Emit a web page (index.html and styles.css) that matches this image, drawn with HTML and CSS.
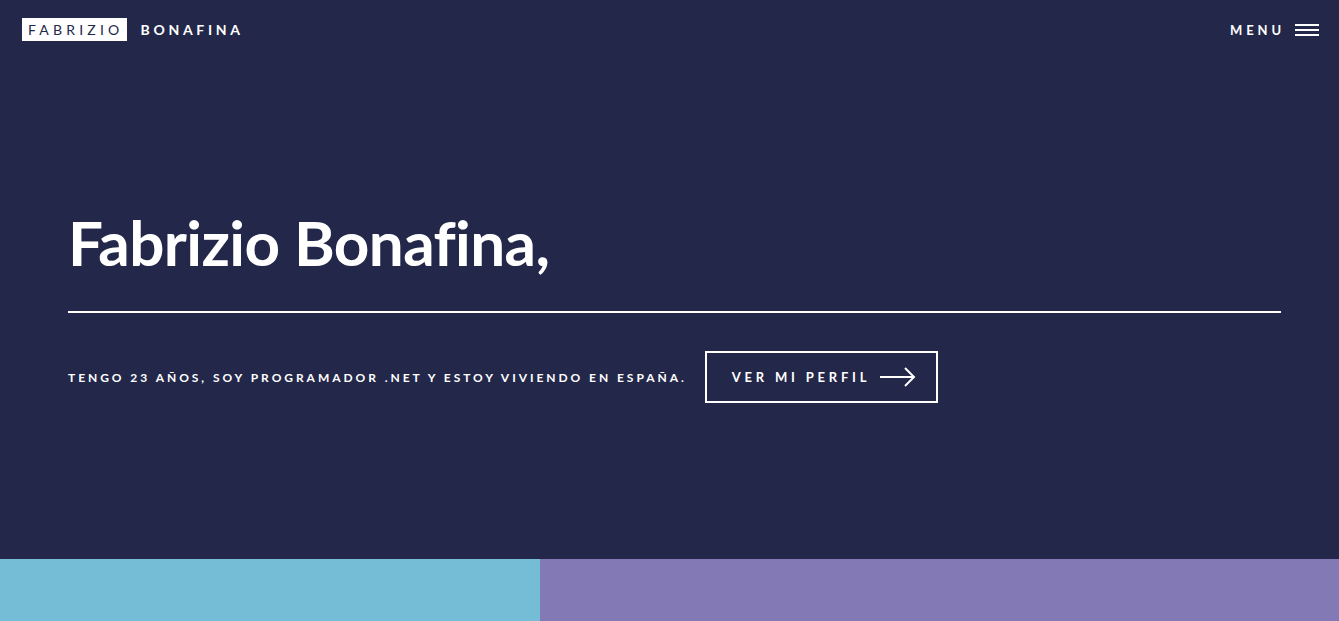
FILE: index.html
```html
<!DOCTYPE html>
<html lang="es">
<head>
<meta charset="utf-8">
<title>Fabrizio Bonafina</title>
<link rel="stylesheet" href="styles.css">
</head>
<body>
<div class="page">
  <header class="topbar">
    <a class="logo" href="#"><span class="logo-box">FABRIZIO</span><span class="logo-rest">BONAFINA</span></a>
    <a class="menu" href="#"><span class="menu-label">MENU</span>
      <svg class="burger" width="24" height="12" viewBox="0 0 24 12"><rect x="0" y="0" width="24" height="2" fill="#fff"/><rect x="0" y="5" width="24" height="2" fill="#fff"/><rect x="0" y="10" width="24" height="2" fill="#fff"/></svg>
    </a>
  </header>
  <section class="hero">
    <h1 class="title">Fabrizio Bonafina,</h1>
    <hr class="rule">
    <div class="intro">
      <p class="tagline">TENGO 23 AÑOS, SOY PROGRAMADOR .NET Y ESTOY VIVIENDO EN ESPAÑA.</p>
      <a class="cta" href="#"><span>VER MI PERFIL</span>
        <svg class="arrow" width="36" height="20" viewBox="0 0 36 20"><path d="M0 10 H34 M25 1 L34 10 L25 19" fill="none" stroke="#fff" stroke-width="2"/></svg>
      </a>
    </div>
  </section>
  <section class="tiles">
    <div class="tile tile-blue"></div>
    <div class="tile tile-purple"></div>
  </section>
</div>
</body>
</html>
```
FILE: styles.css
```css
* { box-sizing: border-box; }
html, body { margin: 0; padding: 0; }
body {
  background: #23284a;
  color: #fff;
  font-family: Lato, "Open Sans", "Liberation Sans", sans-serif;
  overflow: hidden;
}
a { color: inherit; text-decoration: none; }
.page { display: flex; flex-direction: column; height: 621px; }
.topbar {
  display: flex;
  justify-content: space-between;
  align-items: center;
  padding: 18px 20px 0 22px;
  height: 41px;
}
.logo { display: flex; align-items: center; font-size: 14px; font-weight: 700; letter-spacing: 3.7px; }
.logo-box { background: #fff; color: #23284a; padding: 3px 4px 3px 6px; line-height: 17px; font-weight: 400; letter-spacing: 4.2px; }
.logo-rest { margin-left: 13px; line-height: 17px; }
.menu { display: flex; align-items: center; gap: 10px; font-size: 13px; font-weight: 700; letter-spacing: 3.9px; }
.burger { display: block; }
.hero { padding: 165px 58px 0 68px; flex: 1; }
.title { margin: 0; font-size: 62px; font-weight: 700; line-height: 72px; letter-spacing: -0.6px; }
.rule { margin: 33px 0 0; border: 0; height: 2px; background: #fff; }
.intro { display: flex; align-items: center; margin-top: 38px; gap: 18px; }
.tagline { margin: 0; font-size: 12px; font-weight: 700; letter-spacing: 2.95px; }
.cta {
  display: flex; align-items: center; gap: 10px;
  border: 2px solid #fff;
  height: 52px;
  padding: 0 20px 0 25px;
  font-size: 13px; font-weight: 700; letter-spacing: 3.8px;
}
.tiles { display: flex; height: 62px; }
.tile-blue { width: 540px; background: #75bcd6; }
.tile-purple { flex: 1; background: #8279b5; }
```
